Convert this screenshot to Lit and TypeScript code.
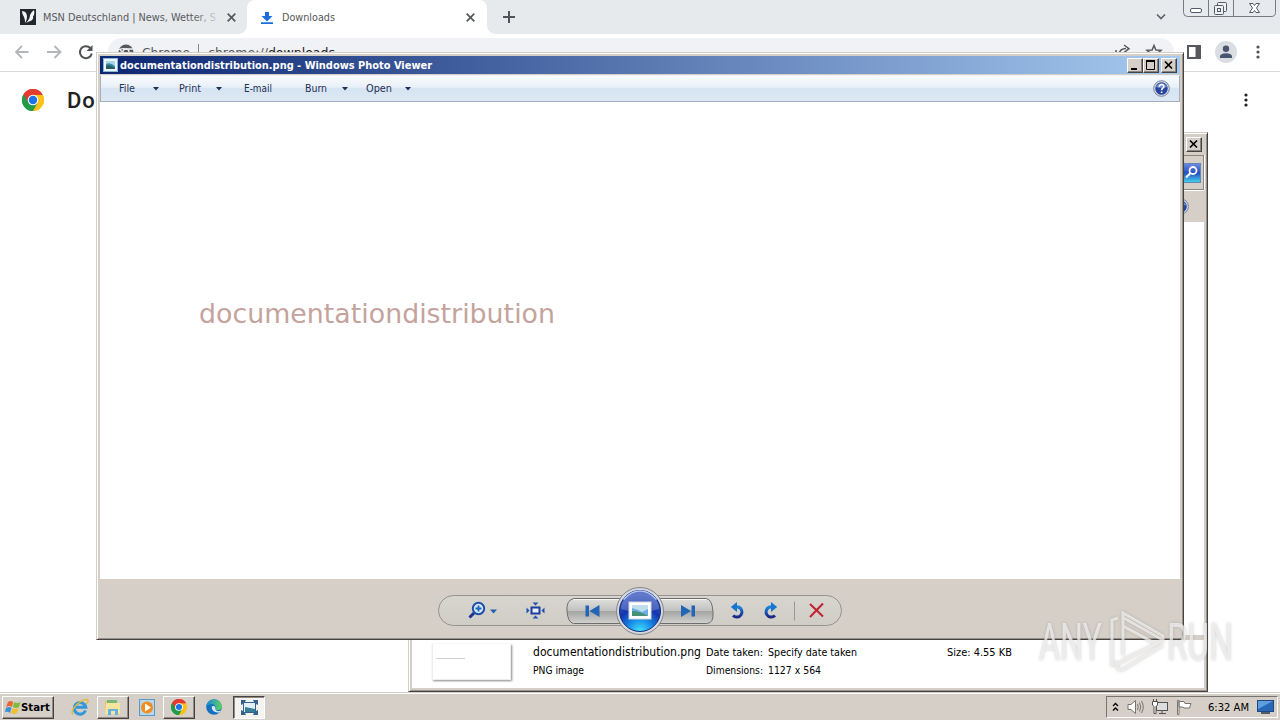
import {html, svg, LitElement, css} from 'lit';
import {customElement, property} from 'lit/decorators.js';

// Text that keeps the metrics of the original system font
const label = (text: string, width: number, cls = '') => html`
  <svg class="label ${cls}" width=${width} height="16">
    <text x="0" y="12" textLength=${width} lengthAdjust="spacingAndGlyphs">${text}</text>
  </svg>
`;

const shared = css`
  :host {
    display: block;
    box-sizing: border-box;
    font-family: 'DejaVu Sans Condensed', 'DejaVu Sans', sans-serif;
    font-size: 11px;
    color: #000;
  }

  * {
    box-sizing: border-box;
  }

  svg {
    display: block;
    flex: none;
    overflow: visible;
  }

  .row {
    display: flex;
    align-items: center;
  }

  .window {
    display: flex;
    flex-direction: column;
    background: #d5cfc7;
    border: 1px solid;
    border-color: #d5cfc7 #45423f #45423f #d5cfc7;
    box-shadow: inset 1px 1px #fff, inset -1px -1px #96918b;
  }

  .caption-button {
    width: 16px;
    height: 15px;
    background: #d5cfc7;
    border: 1px solid;
    border-color: #fff #444 #444 #fff;
    box-shadow: inset -1px -1px #88847e;
  }
`;

const chromeLogo = (size: number) => html`
  <svg width=${size} height=${size} viewBox="0 0 24 24">
    <path d="M12 12 1.6 6A12 12 0 0 1 22.4 6Z" fill="#e33b2e" />
    <path d="M12 12 22.4 6A12 12 0 0 1 12 24Z" fill="#fbc116" />
    <path d="M12 12V24A12 12 0 0 1 1.6 6Z" fill="#229a48" />
    <path d="M12 6.2H22.5A12 12 0 0 1 12 24L17 15Z" fill="#fbc116" />
    <path d="M7 15 1.6 6A12 12 0 0 1 22.5 6.2H12Z" fill="#e33b2e" />
    <path d="M1.6 6A12 12 0 0 0 12 24L17 15H7Z" fill="#229a48" />
    <circle cx="12" cy="12" r="5.8" fill="#fff" />
    <circle cx="12" cy="12" r="4.6" fill="#1a73e8" />
  </svg>
`;

const dots = (color: string) => html`
  <svg width="6" height="16" fill=${color}>
    <circle cx="3" cy="3" r="1.6" />
    <circle cx="3" cy="8" r="1.6" />
    <circle cx="3" cy="13" r="1.6" />
  </svg>
`;

const closeGlyph = html`
  <svg width="14" height="13">
    <path d="M3 2.5 10 9.5M10 2.5 3 9.5" stroke="#000" stroke-width="1.7" />
  </svg>
`;

const helpIcon = html`
  <svg width="17" height="17">
    <circle cx="8.5" cy="8.5" r="7.8" fill="#dfe5ee" stroke="#75808f" />
    <circle cx="8.5" cy="8.5" r="6.3" fill="#2745a0" />
    <path d="M2.8 7a6 5.5 0 0 1 11.4 0Q8 9 2.8 7Z" fill="#6d87c9" />
    <path d="M6.3 6.7C6.3 3.7 11 4 10.8 6.7 10.7 8.3 8.6 8.1 8.6 10.2M8.6 11.4V13" fill="none" stroke="#fff" stroke-width="1.6" />
  </svg>
`;

@customElement('chrome-browser')
export class ChromeBrowser extends LitElement {
  static styles = [
    shared,
    css`
      :host {
        height: 693px;
        background: #fff;
      }

      .label {
        fill: #55585c;
      }

      .tabs {
        height: 34px;
        background: #e7eaed;
        align-items: flex-start;
      }

      .tab {
        height: 34px;
        width: 247px;
        padding-left: 20px;
      }

      .tab .label {
        margin: 0 10px 0 7px;
      }

      .tab.active {
        position: relative;
        width: 240px;
        padding-left: 14px;
        background: #fff;
        border-radius: 8px 8px 0 0;
      }

      .tab.active::before,
      .tab.active::after {
        content: '';
        position: absolute;
        bottom: 0;
        left: -8px;
        width: 8px;
        height: 8px;
        background: radial-gradient(circle at 0 0, transparent 7.5px, #fff 8px);
      }

      .tab.active::after {
        left: auto;
        right: -8px;
        background: radial-gradient(circle at 100% 0, transparent 7.5px, #fff 8px);
      }

      .tab.active .label {
        margin: 0 131px 0 9px;
      }

      .plus {
        margin: 11px auto 0 16px;
      }

      .chevron {
        margin: 13px 16px 0 0;
      }

      .toolbar {
        height: 38px;
        border-bottom: 1px solid #d9dcdf;
        padding: 0 19px 1px 14px;
      }

      .omnibox {
        width: 1066px;
        height: 28px;
        margin-left: 14px;
        padding: 0 12px 0 10px;
        border-radius: 14px;
        background: #f1f2f5;
      }

      .omnibox .label {
        font-size: 13px;
        margin: 2px 0 0 8px;
      }

      .omnibox .url {
        margin: 2px auto 0 9px;
      }

      .pipe {
        width: 1px;
        height: 16px;
        margin-left: 8px;
        background: #85888c;
      }

      .panel {
        margin-left: 13px;
      }

      .header {
        height: 56px;
        padding: 0 31px 0 22px;
      }

      .header h1 {
        margin: 0 auto 0 23px;
        font: 500 22px Roboto, sans-serif;
        letter-spacing: 1px;
        color: #202124;
      }

      .avatar {
        margin: 0 18px 0 14px;
      }
    `,
  ];

  render() {
    return html`
      <div class="row tabs">
        <div class="row tab">
          <svg width="16" height="16">
            <rect width="16" height="16" fill="#23262a" />
            <path d="M2 2Q7 2 7 8Q7 11 5 14Q5 10 4 8Q2 5 2 2ZM14 1Q15 5 13 7.500Q14 11 9 12.500L6 14Q10 10 10 6Q11 3 14 1Z" fill="#f4f5f6" />
          </svg>
          <svg class="label" width="174" height="16">
            <defs>
              <linearGradient id="fade" gradientUnits="userSpaceOnUse" x1="150" x2="178">
                <stop offset="0" stop-color="#55585c" />
                <stop offset="1" stop-color="#55585c" stop-opacity="0" />
              </linearGradient>
            </defs>
            <text x="0" y="12" textLength="173" lengthAdjust="spacingAndGlyphs" fill="url(#fade)">MSN Deutschland | News, Wetter, S</text>
          </svg>
          <svg width="9" height="9"><path d="M.7.7 8.300 8.300M8.300.7.7 8.300" stroke="#55585c" stroke-width="1.700" /></svg>
        </div>
        <div class="row tab active">
          <svg width="12" height="13" fill="#1a6fdc"><path d="M4 1H8V5H11.500L6 10.500.5 5H4ZM0 11.300H12V13H0Z" /></svg>
          ${label('Downloads', 53)}
          <svg width="9" height="9"><path d="M.7.7 8.300 8.300M8.300.7.7 8.300" stroke="#55585c" stroke-width="1.700" /></svg>
        </div>
        <svg class="plus" width="12" height="12"><path d="M6 0V12M0 6H12" stroke="#505358" stroke-width="2" /></svg>
        <svg class="chevron" width="12" height="8"><path d="M2 1.500 6 5.500 10 1.500" fill="none" stroke="#5f6368" stroke-width="1.700" /></svg>
        <svg width="97" height="18" fill="none" stroke="#767b82">
          <path d="M.5 0V12.500Q.5 16.500 4.500 16.500H88Q92.500 16.500 92.500 12.500V0M25.500 0V16M50.500 0V16" />
          <rect x="7.500" y="8.500" width="11" height="4" rx="1.500" fill="#fff" stroke="#555b65" />
          <g stroke="#555b65" fill="#eef0f2">
            <rect x="34.500" y="2.500" width="9" height="9" rx="1" />
            <rect x="31.500" y="5.500" width="9" height="9" rx="1" />
            <rect x="34.500" y="8.500" width="3" height="3" />
          </g>
          <path d="M66.500 3.500H70L71.500 5.500 73 3.500H76.500L73.500 8 76.500 12.500H73L71.500 10.500 70 12.500H66.500L69.500 8Z" stroke="#555b65" fill="#fff" />
        </svg>
      </div>
      <div class="row toolbar">
        <svg width="80" height="16" fill="none" stroke-width="1.800">
          <path d="M14.500 8H2M8 2 2 8 8 14M33 8H46M40.500 2 46.500 8 40.500 14" stroke="#b4b7ba" />
          <path d="M76.300 4A6 6 0 1 0 77.800 9.500" stroke="#505357" stroke-width="2" />
          <path d="M78.500 1V7H72.500Z" fill="#505357" />
        </svg>
        <div class="row omnibox">
          <svg width="16" height="16">
            <circle cx="8" cy="8" r="7.500" fill="#55595d" />
            <path d="M1 5.500Q5 4 8 5H15M5 9 1.500 5M11 9 8 15" stroke="#f1f2f5" stroke-width="1.300" fill="none" />
            <circle cx="8" cy="8" r="3" fill="#55595d" stroke="#f1f2f5" stroke-width="1.300" />
          </svg>
          ${label('Chrome', 48)}
          <span class="pipe"></span>
          <svg class="label url" width="127" height="16">
            <text x="0" y="12" textLength="127" lengthAdjust="spacingAndGlyphs">chrome://<tspan fill="#202124">downloads</tspan></text>
          </svg>
          <svg width="47" height="16" fill="none" stroke="#55585c" stroke-width="1.500">
            <path d="M1 6V14H12V11M4 10Q5 4.500 11 4.500M9 1 14 4.700 9 8.500M39 1.500 40.900 6 46 6.300 42.200 9.500 43.500 14.500 39 11.800 34.500 14.500 35.800 9.500 32 6.300 37.100 6Z" />
          </svg>
        </div>
        <svg class="panel" width="14" height="14"><path d="M1 1H13V13H1Z" fill="none" stroke="#55585c" stroke-width="2" /><path d="M8.500 1H13V13H8.500Z" fill="#55585c" /></svg>
        <svg class="avatar" width="22" height="22" fill="#46566e">
          <circle cx="11" cy="11" r="11" fill="#dadee3" />
          <circle cx="11" cy="7.800" r="3.200" />
          <path d="M5 17V15Q6 12.300 11 12.300T17 15V17Z" />
        </svg>
        ${dots('#505357')}
      </div>
      <div class="row header">
        ${chromeLogo(22)}
        <h1>Downloads</h1>
        ${dots('#202124')}
      </div>
    `;
  }
}

@customElement('explorer-window')
export class ExplorerWindow extends LitElement {
  static styles = [
    shared,
    css`
      .window {
        height: 560px;
        padding: 2px 3px 3px;
      }

      .row {
        justify-content: flex-end;
      }

      .title {
        height: 20px;
        padding: 0 2px 2px 0;
      }

      .address {
        height: 35px;
        border: 1px solid #8b8780;
        box-shadow: 0 1px #fff, 1px 0 #fff;
        padding-right: 2px;
      }

      .commands {
        height: 32px;
        padding-right: 15px;
      }

      .files {
        flex: 1;
        background: #fff;
      }

      .details {
        display: grid;
        grid-template-columns: 101px 173px 62px 179px 1fr;
        grid-template-rows: 16px 16px;
        row-gap: 2px;
        height: 53px;
        padding: 4px 0 0 20px;
        border-top: 5px solid #d5cfc7;
        background: #fff;
      }

      .thumb {
        grid-row: span 2;
        width: 79px;
        height: 36px;
        padding: 14px 0 0 3px;
        border: 1px solid #eee;
        border-top: 0;
        box-shadow: 1px 1px 2px #888;
      }

      .thumb::before {
        content: '';
        display: block;
        width: 29px;
        height: 1px;
        background: #d5d1cf;
      }

      .name {
        font-size: 12px;
      }
    `,
  ];

  render() {
    return html`
      <div class="window">
        <div class="row title"><span class="caption-button">${closeGlyph}</span></div>
        <div class="row address">
          <svg width="20" height="20">
            <defs>
              <linearGradient id="search" x2="0" y2="1">
                <stop offset="0" stop-color="#6b8ce0" />
                <stop offset=".5" stop-color="#2450c0" />
                <stop offset="1" stop-color="#46d5ee" />
              </linearGradient>
            </defs>
            <rect x=".5" y=".5" width="19" height="19" fill="url(#search)" stroke="#6486b5" />
            <circle cx="12" cy="7.500" r="3.500" fill="none" stroke="#fff" stroke-width="1.800" />
            <path d="M9.500 10 5 14.500" stroke="#fff" stroke-width="2.200" />
          </svg>
        </div>
        <div class="row commands">${helpIcon}</div>
        <div class="files"></div>
        <div class="details">
          <div class="thumb"></div>
          ${label('documentationdistribution.png', 168, 'name')}
          ${label('Date taken:', 57)}
          ${label('Specify date taken', 89)}
          ${label('Size: 4.55 KB', 65)}
          ${label('PNG image', 51)}
          ${label('Dimensions:', 57)}
          ${label('1127 x 564', 53)}
        </div>
      </div>
    `;
  }
}

@customElement('photo-viewer')
export class PhotoViewer extends LitElement {
  @property() file = 'documentationdistribution';

  static styles = [
    shared,
    css`
      .window {
        height: 588px;
        padding: 3px 3px 2px;
      }

      .title {
        height: 18px;
        padding: 0 3px;
        background: linear-gradient(90deg, #0c2672, #a6caf0);
      }

      .title .label {
        margin: 0 auto 0 2px;
        fill: #fff;
        font-weight: bold;
      }

      .title .caption-button:last-child {
        margin-left: 2px;
      }

      .menu {
        height: 27px;
        margin-top: 1px;
        padding: 0 9px 1px 18px;
        border: 1px solid #a3b0c0;
        border-top-color: #edf2f8;
        background: linear-gradient(#fafcfe, #e7eff7 45%, #d7e4f1 50%, #dbe8f4);
      }

      .menu .label {
        fill: #1e3058;
      }

      .caret {
        margin: 1px 20px 0 18px;
      }

      .caret.print {
        margin: 1px 22px 0 15px;
      }

      .caret.burn {
        margin: 1px 18px 0 15px;
      }

      .caret.open {
        margin-left: 13px;
      }

      .email {
        margin-right: 33px;
      }

      .help {
        margin-left: auto;
      }

      .canvas {
        flex: 1;
        padding: 195px 0 0 99px;
        background: #fff;
      }

      .picture text {
        font-family: 'DejaVu Sans', sans-serif;
        font-size: 27px;
        fill: #c4a39d;
      }

      .footer {
        height: 58px;
        padding-top: 5px;
        justify-content: center;
      }

      .controls {
        width: 404px;
        height: 31px;
        padding-left: 29px;
        border: 1px solid #96948f;
        border-radius: 16px;
        background: linear-gradient(#d8d5cf, #d0cdc7);
      }
    `,
  ];

  private _caret(cls = '') {
    return html`<svg class="caret ${cls}" width="6" height="4"><path d="M0 0H6L3 3.500Z" fill="#1e3058" /></svg>`;
  }

  private _rotate(flip: boolean) {
    return svg`
      <g transform=${flip ? 'translate(49 0) scale(-1 1)' : ''}>
        <path d="M6 5H8.500A5.200 5.200 0 1 1 3 13.500" fill="none" stroke="url(#blue)" stroke-width="3" />
        <path d="M7 0V10L.8 5Z" fill="#1775d0" />
      </g>
    `;
  }

  render() {
    return html`
      <div class="window">
        <div class="row title">
          <svg width="15" height="14">
            <rect x=".5" y=".5" width="14" height="13" fill="#eef6fa" stroke="#82b8d5" />
            <rect x="3" y="3" width="9" height="8" fill="#3989a7" />
            <path d="M3 6Q7 4 12 8V3H3Z" fill="#a9d7e8" />
            <path d="M3 8Q6 6 12 10V11H3Z" fill="#285e60" />
          </svg>
          ${label(this.file + '.png - Windows Photo Viewer', 312)}
          <span class="caption-button"><svg width="14" height="13"><path d="M3 10H9" stroke="#000" stroke-width="2" /></svg></span>
          <span class="caption-button"><svg width="14" height="13"><path d="M2.500 2V10.500H10.500V2M2 2.500H11" fill="none" stroke="#000" /><path d="M2 2H11" stroke="#000" stroke-width="2" /></svg></span>
          <span class="caption-button">${closeGlyph}</span>
        </div>
        <div class="row menu">
          ${label('File', 16)} ${this._caret()}
          ${label('Print', 22)} ${this._caret('print')}
          ${label('E-mail', 28, 'email')}
          ${label('Burn', 22)} ${this._caret('burn')}
          ${label('Open', 26)} ${this._caret('open')}
          <span class="help">${helpIcon}</span>
        </div>
        <div class="canvas">
          <svg class="picture" width="355" height="36">
            <text x="0" y="26" textLength="356" lengthAdjust="spacingAndGlyphs">${this.file}</text>
          </svg>
        </div>
        <div class="row footer">
          <div class="row controls">
            <svg width="374" height="48" fill="none">
              <defs>
                <linearGradient id="blue" x2="0" y2="1">
                  <stop offset="0" stop-color="#1686dc" />
                  <stop offset="1" stop-color="#1b2687" />
                </linearGradient>
                <linearGradient id="nav" x2="0" y2="1">
                  <stop offset="0" stop-color="#e0e0df" />
                  <stop offset=".48" stop-color="#c2c2c0" />
                  <stop offset=".52" stop-color="#a4a5a4" />
                  <stop offset="1" stop-color="#d2d2d0" />
                </linearGradient>
                <radialGradient id="orb" cx=".5" cy="1" r=".9">
                  <stop offset="0" stop-color="#48e5ff" />
                  <stop offset=".35" stop-color="#1489e5" />
                  <stop offset=".65" stop-color="#1535ad" />
                  <stop offset="1" stop-color="#3b58be" />
                </radialGradient>
              </defs>
              <g>
                <path d="M6 26 1.500 30.500" stroke="#1b3190" stroke-width="3" />
                <circle cx="10.500" cy="21.500" r="5.700" fill="#d9e7f5" stroke="#1d4faa" stroke-width="2" />
                <path d="M10.500 18.500V24.500M7.500 21.500H13.500" stroke="#1d62bf" stroke-width="1.800" />
                <path d="M22 22.500H29L25.500 26.500Z" fill="#2260b0" />
              </g>
              <g transform="translate(58.500 15.500)" fill="#1d50ab">
                <rect x="5" y="5" width="8" height="6" fill="#e5edf5" stroke="#1d3d9f" stroke-width="2" />
                <path d="M6 0H12L9 3ZM6 16H12L9 13ZM0 5 3 8 0 11ZM18 5 15 8 18 11Z" />
              </g>
              <path d="M105 11H238Q243.500 12 244.500 24T238 36H105Q99.500 35 98.500 24T105 11Z" transform="translate(.5 .5)" fill="url(#nav)" stroke="#6e6d6b" />
              <path d="M106 12.500H238" stroke="#f5f5f4" />
              <g fill="#2265b6">
                <path d="M117.500 18.500H121V29.500H117.500ZM131.500 18V30L121.500 24ZM223.500 18.500H227V29.500H223.500ZM213 18V30L223 24Z" />
              </g>
              <circle cx="172" cy="24" r="23.500" fill="#d3d7df" stroke="#85858a" />
              <circle cx="172" cy="24" r="20.500" fill="url(#orb)" stroke="#172c78" />
              <path d="M153 22A19 17 0 0 1 191 22Q172 29 153 22Z" fill="#fff" opacity=".2" />
              <path d="M155.500 12.500Q163 4 172 4T188.500 12.500" stroke="#afc4f1" stroke-width="1.500" />
              <rect x="161" y="15" width="22" height="17" fill="#fff" stroke="#d1d8df" />
              <rect x="164" y="18" width="16" height="11" fill="#6caee0" />
              <path d="M164 21Q169 22 174 25L180 22V18H164Z" fill="#bddff0" />
              <path d="M164 24Q172 24 180 29H164Z" fill="#459078" />
              <g transform="translate(262 15)">${this._rotate(false)}</g>
              <g transform="translate(261 15)">${this._rotate(true)}</g>
              <path d="M326.500 14.500V33.500" stroke="#9a9893" />
              <path d="M342 17 355 29.500M355 16.500 342 30" stroke="#bd2430" stroke-width="2" />
            </svg>
          </div>
        </div>
      </div>
    `;
  }
}

@customElement('task-bar')
export class TaskBar extends LitElement {
  static styles = [
    shared,
    css`
      .bar {
        height: 28px;
        padding: 1px 2px 0 2px;
        background: #d5cfc7;
        border-top: 1px solid #d5cfc7;
        box-shadow: inset 0 1px #fff;
      }

      .start,
      .task {
        height: 23px;
        border: 1px solid;
        border-color: #fff #45423f #45423f #fff;
        box-shadow: inset -1px -1px #908b84;
      }

      .start {
        width: 52px;
        padding-left: 2px;
        font-weight: bold;
      }

      .task {
        width: 32px;
        margin: 0 10px 0 8px;
        justify-content: center;
      }

      .task.pressed {
        margin: 0 0 0 11px;
        border-color: #45423f #fff #fff #45423f;
        box-shadow: inset 1px 1px #908b84;
        background: #f5f3f0;
      }

      .ie {
        margin-left: 17px;
      }

      .edge {
        margin-left: 1px;
      }

      .tray {
        gap: 8px;
        width: 172px;
        height: 22px;
        margin-left: auto;
        padding-left: 5px;
        border: 1px solid;
        border-color: #77736d #fff #fff #77736d;
      }

      .tray .time {
        margin-left: 8px;
      }
    `,
  ];

  render() {
    return html`
      <div class="row bar">
        <div class="row start">
          <svg width="16" height="16">
            <path d="M3 3Q6 1 8 3L7 8Q4 6 1 8Z" fill="#e96532" />
            <path d="M9 3Q12 5 15.500 3L14 8Q11 10 8 8Z" fill="#80bc3c" />
            <path d="M1 9Q4 7 6.500 9L5 14Q3 12 0 13Z" fill="#3b90d7" />
            <path d="M7.500 9Q10 11 13.500 9L12 14Q9 16 6 14Z" fill="#f4bf2c" />
          </svg>
          ${label('Start', 29)}
        </div>
        <svg class="ie" width="18" height="18" fill="none">
          <path d="M14.500 12.500A5.800 5.800 0 1 1 14.800 9.200H5" stroke="#3397d9" stroke-width="3" />
          <path d="M2 16.500Q-1 14 5 7.500T16.500 1.500Q18 2.500 15.500 6" stroke="#e1b940" stroke-width="1.400" />
        </svg>
        <div class="row task">
          <svg width="18" height="16">
            <path d="M1 2H7L8 4H16V14H1Z" fill="#e9c45d" />
            <path d="M3 1H13V5H3Z" fill="#77b878" />
            <path d="M2 4H16V15H1Z" fill="#f7e49d" />
            <path d="M4 16V10H14V16H11V12H7V16Z" fill="#64b2df" />
          </svg>
        </div>
        <svg width="16" height="17">
          <rect x=".5" y=".5" width="15" height="16" fill="#b8d6ea" stroke="#5c99c8" />
          <circle cx="8" cy="8.500" r="6" fill="#f18c1d" />
          <path d="M6 4.500 12 8.500 6 12.500Z" fill="#fff" />
        </svg>
        <div class="row task">${chromeLogo(16)}</div>
        <svg class="edge" width="16" height="16" viewBox="0 0 17 17">
          <defs>
            <linearGradient id="edge" x2="1">
              <stop offset="0" stop-color="#1488dc" />
              <stop offset="1" stop-color="#5fd45b" />
            </linearGradient>
          </defs>
          <circle cx="8.500" cy="8.500" r="8.300" fill="#176fc0" />
          <path d="M.3 8A8.300 8.300 0 0 1 16.800 8Q17 12 12 12 9 12 10.500 9 9 5 5 5.500 1.500 6 .3 8Z" fill="url(#edge)" />
          <path d="M6 8.500Q6 14 13 14.500 15 14 16 12.500 11 14 10 11 10.500 8 8.500 7.500 6.500 7.200 6 8.500Z" fill="#d5e8ee" />
        </svg>
        <div class="row task pressed">
          <svg width="17" height="15">
            <path d="M0 0H5L4 2H13L12 0H17V5L15 4V11L17 10V15H12L13 13H4L5 15H0V10L2 11V4L0 5Z" fill="#35618d" />
            <rect x="3" y="3" width="11" height="9" fill="#dff0f7" />
            <path d="M4 7 14 9V12H4Z" fill="#377d95" />
          </svg>
        </div>
        <div class="row tray">
          <svg width="7" height="10"><path d="M1 4 3.500 1.500 6 4M1 8.500 3.500 6 6 8.500" fill="none" stroke="#000" stroke-width="1.400" /></svg>
          <svg width="17" height="16" fill="#fff" stroke="#77736f">
            <path d="M1 5.500H4L8.500 1.500V14.500L4 10.500H1Z" />
            <path d="M10.500 5Q12 8 10.500 11M12.500 3.500Q15 8 12.500 12.500M14.500 2Q18 8 14.500 14" fill="none" />
          </svg>
          <svg width="16" height="16" fill="#fff" stroke="#575450">
            <rect x="4.500" y="3.500" width="11" height="8" fill="#ddd" />
            <path d="M7 14.500H14M10 12V14M.5 2.500H5.500V6L4 7.500V14.500H2V7.500L.5 6ZM1.500 0V3M4.500 0V3" />
          </svg>
          <svg width="16" height="15" fill="#fff" stroke="#77736f"><path d="M1.500 14.500V.5H3V14.500ZM3 1.500H8L9 3.500H15L13.500 8H8L7 7H3Z" /></svg>
          <span class="time">${label('6:32 AM', 41)}</span>
          <svg width="17" height="14">
            <rect x=".5" y=".5" width="16" height="11" fill="#2768b9" stroke="#264680" />
            <path d="M1 1H16L1 9Z" fill="#5d9edf" />
            <path d="M4 13H13" stroke="#525d6c" stroke-width="2" />
          </svg>
        </div>
      </div>
    `;
  }
}

@customElement('app-root')
export class AppRoot extends LitElement {
  static styles = css`
    :host {
      display: block;
      position: relative;
      width: 1280px;
      height: 720px;
      overflow: hidden;
      background: #fff;
    }

    explorer-window {
      position: absolute;
      left: 408px;
      top: 132px;
      width: 800px;
    }

    photo-viewer {
      position: absolute;
      left: 96px;
      top: 52px;
      width: 1088px;
    }

    task-bar {
      position: absolute;
      left: 0;
      right: 0;
      bottom: 0;
    }

    .watermark {
      position: absolute;
      left: 1036px;
      top: 606px;
      overflow: visible;
      font-family: Roboto, sans-serif;
      font-size: 51px;
      filter: drop-shadow(0 0 1.5px rgba(110, 110, 110, 0.45));
    }
  `;

  render() {
    return html`
      <chrome-browser></chrome-browser>
      <explorer-window></explorer-window>
      <photo-viewer></photo-viewer>
      <task-bar></task-bar>
      <svg class="watermark" width="204" height="70" fill="#f3f2f1" fill-opacity=".75">
        <text x="3" y="53.500" textLength="63" lengthAdjust="spacingAndGlyphs">ANY</text>
        <text x="131" y="53.500" textLength="66" lengthAdjust="spacingAndGlyphs">RUN</text>
        <g fill="none" stroke="#f1f0ef" stroke-opacity=".75" stroke-width="3">
          <path d="M82 12 76 14V59L82 56M87 49V7L127 30V34L88 12M87 20 120 38 87 54M127 34 80 59Q82 66 88 63L127 39" />
        </g>
      </svg>
    `;
  }
}
